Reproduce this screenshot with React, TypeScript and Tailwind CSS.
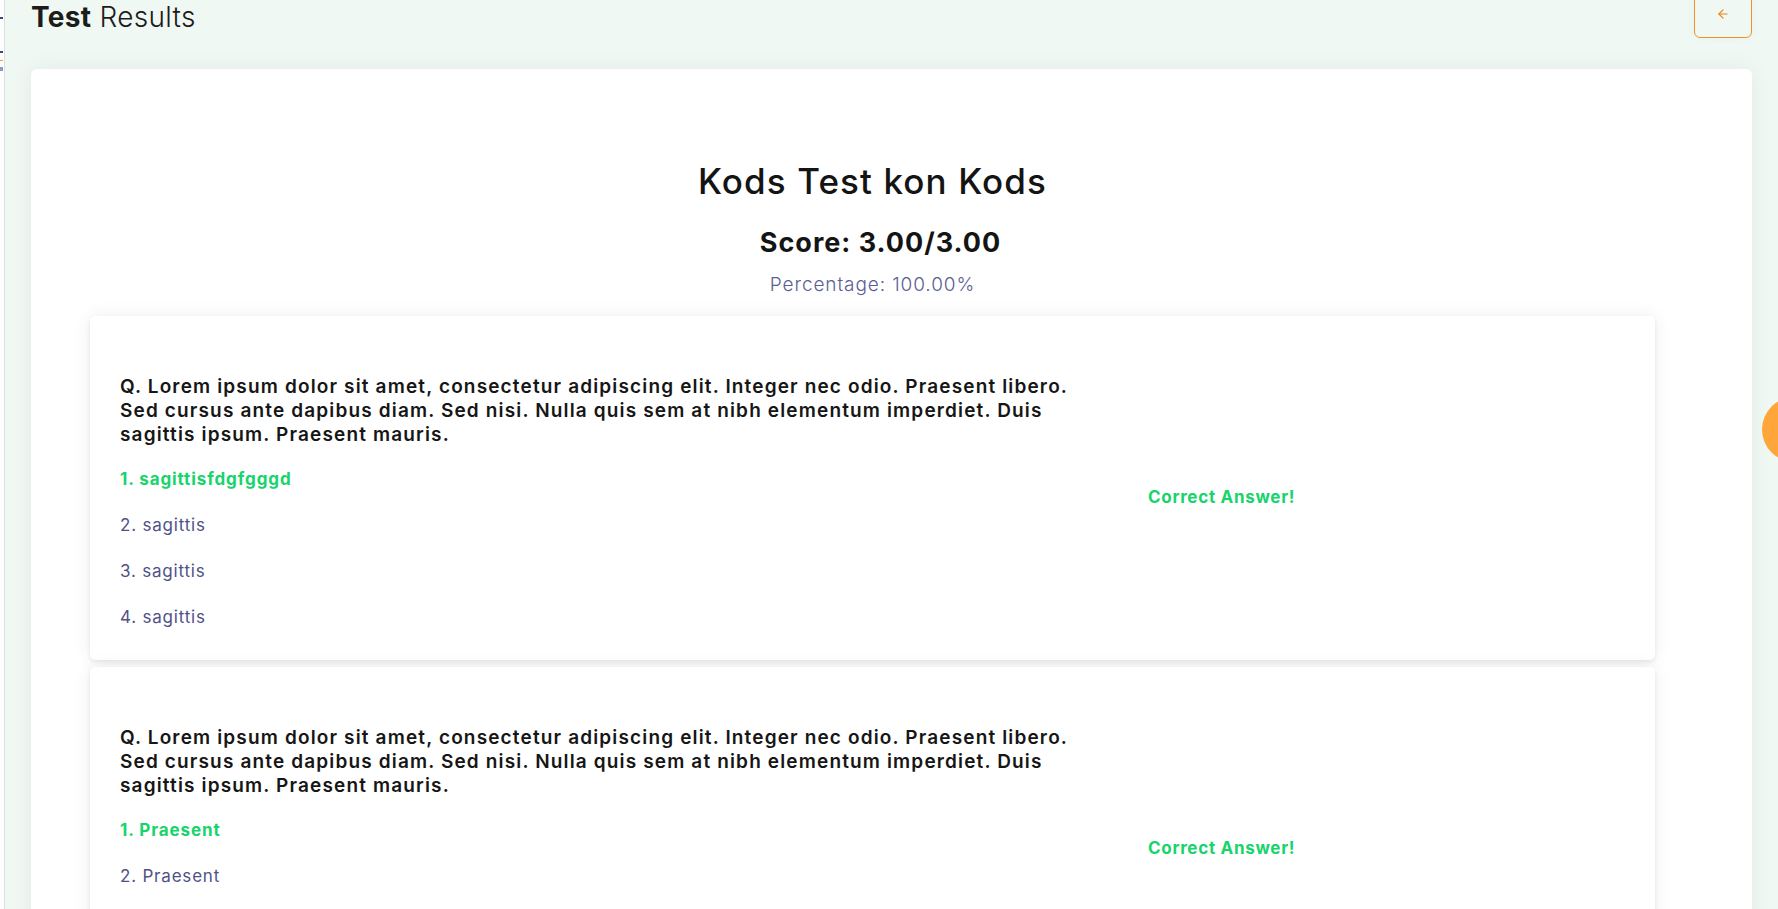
import React from "react";
import { ArrowLeft } from "lucide-react";

const QUESTION =
  "Q. Lorem ipsum dolor sit amet, consectetur adipiscing elit. Integer nec odio. Praesent libero. Sed cursus ante dapibus diam. Sed nisi. Nulla quis sem at nibh elementum imperdiet. Duis sagittis ipsum. Praesent mauris.";

function QuestionCard({ options }: { options: string[] }) {
  return (
    <div className="flex w-[1565px] items-center rounded-[5px] bg-white pb-[31px] pl-[30px] pt-[59px] shadow-[0_0_18px_rgba(0,0,0,0.07),0_2px_4px_rgba(0,0,0,0.07)]">
      <div className="w-[970px] shrink-0">
        <p className="text-[19px] font-semibold leading-[24px] tracking-[1.15px] text-[#161616]">
          {QUESTION}
        </p>
        <ul className="mt-[20px] flex flex-col gap-[22px]">
          {options.map((o, i) => (
            <li
              key={i}
              className={
                i === 0
                  ? "text-[17px] font-bold leading-[24px] tracking-[0.9px] text-[#17d46c]"
                  : "text-[17px] font-normal leading-[24px] tracking-[0.8px] text-[#4f5287]"
              }
            >
              {i + 1}. {o}
            </li>
          ))}
        </ul>
      </div>
      <div className="mb-[11px] ml-[58px] text-[17px] font-bold leading-[24px] tracking-[0.7px] text-[#17d46c]">
        Correct Answer!
      </div>
    </div>
  );
}

export default function App() {
  return (
    <div className="relative flex h-[909px] w-full overflow-hidden bg-[#f0f8f4] font-['Inter',sans-serif]">
      {/* collapsed sidebar strip */}
      <div className="relative w-[5px] shrink-0 border-r border-[#dcdfe3] bg-white">
        <div className="absolute left-0 top-[17px] h-[2px] w-[3px] bg-[#3b4a7a]" />
        <div className="absolute left-0 top-[51px] h-[2px] w-[3px] bg-[#3b4a7a]" />
        <div className="absolute left-0 top-[60px] h-[1px] w-[3px] bg-[#f59a3a]" />
        <div className="absolute left-0 top-[67px] h-[4px] w-[3px] bg-[#8a9bc7]" />
      </div>

      {/* main area */}
      <div className="flex min-w-0 flex-1 flex-col px-[26px]">
        <div className="flex h-[69px] shrink-0 items-start justify-between">
          <h1 className="mt-[1px] text-[28px] leading-[32px] tracking-[0.3px] text-[#1c1c1c]">
            <span className="font-bold">Test</span>{" "}
            <span className="font-light">Results</span>
          </h1>
          <button className="-mt-[10px] flex h-[48px] w-[58px] items-center justify-center rounded-[6px] border border-[#f5921f] shadow-[0_0_10px_rgba(0,0,0,0.04)]">
            <ArrowLeft size={14} strokeWidth={2} className="text-[#e8860f]" />
          </button>
        </div>

        <div className="flex-1 rounded-t-[6px] bg-white pl-[59px] shadow-[0_0_22px_rgba(0,0,0,0.06)]">
          <div className="w-[1565px] pt-[92px] text-center">
            <h2 className="text-[35px] font-medium leading-[40px] tracking-[1.1px] text-[#141414]">
              Kods Test kon Kods
            </h2>
            <h3 className="mt-[26px] pl-[16px] text-[27px] font-bold leading-[32px] tracking-[1px] text-[#141414]">
              Score: 3.00/3.00
            </h3>
            <p className="mt-[14px] text-[19px] font-light leading-[24px] tracking-[0.9px] text-[#5b5e94]">
              Percentage: 100.00%
            </p>
          </div>

          <div className="mt-[19px] flex flex-col gap-[7px]">
            <QuestionCard options={["sagittisfdgfgggd", "sagittis", "sagittis", "sagittis"]} />
            <QuestionCard options={["Praesent", "Praesent", "Praesent", "Praesent"]} />
          </div>
        </div>
      </div>

      {/* floating orange button, partially off-screen */}
      <div className="absolute left-[1762px] top-[397px] h-[65px] w-[65px] rounded-full bg-[#ffa63b]" />
    </div>
  );
}
